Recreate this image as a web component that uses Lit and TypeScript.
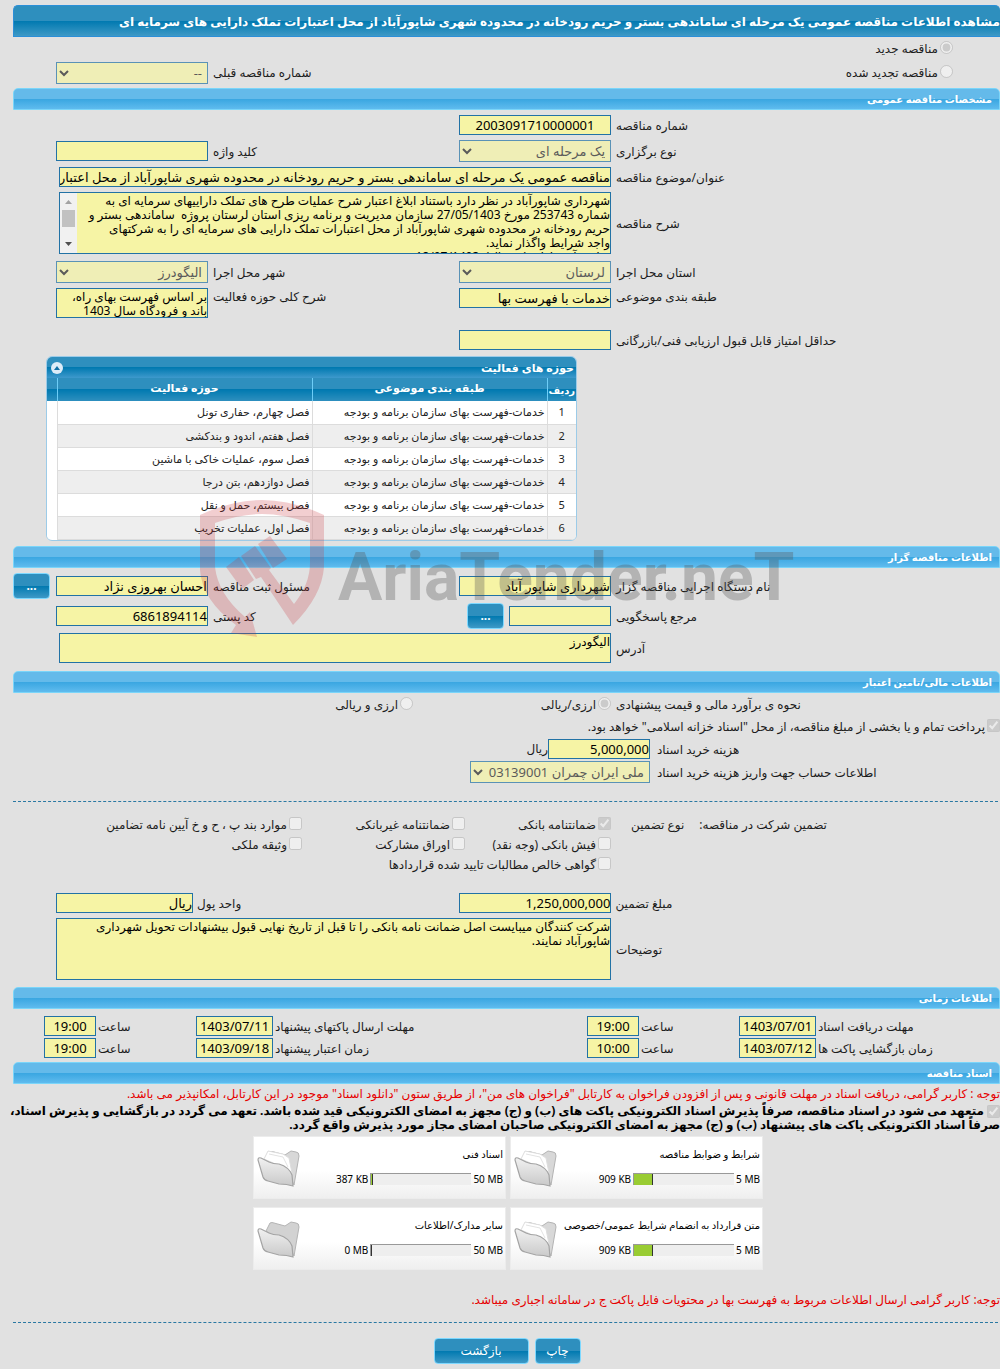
import { LitElement, html, css, svg, nothing } from "lit";
import { customElement } from "lit/decorators.js";

interface Activity { row: number; category: string; field: string; }
interface DocFile { title: string; used: string; max: string; percent: number; empty?: boolean; }

const ACTIVITIES: Activity[] = [
  "فصل چهارم، حفاری تونل",
  "فصل هفتم، اندود و بندکشی",
  "فصل سوم، عملیات خاکی با ماشین",
  "فصل دوازدهم، بتن درجا",
  "فصل بیستم، حمل و نقل",
  "فصل اول، عملیات تخریب",
].map((field, i) => ({ row: i + 1, category: "خدمات-فهرست بهای سازمان برنامه و بودجه", field }));

const FILES: DocFile[] = [
  { title: "شرایط و ضوابط مناقصه", used: "909 KB", max: "5 MB", percent: 19 },
  { title: "اسناد فنی", used: "387 KB", max: "50 MB", percent: 2 },
  { title: "متن قرارداد به انضمام شرایط عمومی/خصوصی", used: "909 KB", max: "5 MB", percent: 19 },
  { title: "سایر مدارک/اطلاعات", used: "0 MB", max: "50 MB", percent: 0, empty: true },
];

const DESCRIPTION = [
  "شهرداری شاپورآباد در نظر دارد باستناد ابلاغ اعتبار شرح عملیات طرح های تملک داراییهای سرمایه ای به",
  "شماره 253743 مورخ 27/05/1403 سازمان مدیریت و برنامه ریزی استان لرستان پروژه  ساماندهی بستر و",
  "حریم رودخانه در محدوده شهری شاپورآباد از محل اعتبارات تملک دارایی های سرمایه ای را به شرکتهای",
  "واجد شرایط واگذار نماید.",
  "مبلغ برآورد اولیه (به ریال)  18/07/1403",
].join("\n");

@customElement("app-root")
export class AppRoot extends LitElement {
  static styles = css`
    :host {
      display: block;
      direction: rtl;
      background: #e1e1e1;
      color: #1c1c1c;
      font-family: "Noto Sans", "DejaVu Sans", sans-serif;
      font-size: 12px;
      line-height: 14px;
      overflow: hidden;
    }
    * { box-sizing: border-box; }
    .page { position: relative; padding: 5px 0; white-space: nowrap; }
    h1, h2 {
      margin: 0 0 0 13px;
      color: #fff;
      font-weight: bold;
      border-radius: 5px 5px 0 0;
      overflow: hidden;
    }
    h1 {
      height: 32px;
      padding-top: 9px;
      font-size: 12px;
      border: 1px solid #2b8fd8;
      border-inline-start: 0;
      background: linear-gradient(#2e8fbe 0 49%, #0079b0 50%, #3e99c6);
    }
    h2 {
      height: 22px;
      padding: 3px 7px 0;
      font-size: 10px;
      border: 1px solid #7ad5f9;
      background: linear-gradient(#64baea 0 49%, #39a6e1 50%, #5fbbee);
    }
    .stack { display: flex; flex-direction: column; gap: 5px; padding: 5px 0; }
    .row {
      display: grid;
      grid-template-columns: minmax(0, 384fr) 152px minmax(0, 241fr) 152px;
      column-gap: 5px;
      align-items: center;
      padding-inline-end: 56px;
    }
    .row > label { text-align: end; padding-top: 2px; }
    .place { margin-top: 2px; }
    .score { margin-top: 7px; }
    .top { align-items: start; }
    .wide { grid-column: 2 / -1; margin-inline-end: 3px; }
    input:not([type]), textarea, select {
      width: 100%;
      min-width: 0;
      margin: 0;
      font-family: inherit;
      font-size: 12px;
      line-height: 14px;
      color: #000;
      background: #f6f4a5;
      border: 1px solid #2272a5;
      border-radius: 0;
      outline: 0;
      direction: rtl;
    }
    input:not([type]) { height: 20px; padding: 1px 0; font-size: 13px; }
    select { height: 22px; padding: 0 1px; font-size: 13px; }
    select:disabled { opacity: 0.7; color: #222; }
    textarea { display: block; padding: 1px 0 0; resize: none; white-space: pre; overflow: hidden; }
    .h62 { height: 62px; }
    .h30 { height: 30px; }
    .scrolled { position: relative; }
    .rail { position: absolute; left: 1px; top: 1px; background: #f1f1f1; }
    .center { text-align: center; }
    input[type="radio"], input[type="checkbox"] { width: 13px; height: 13px; margin: 0; flex: none; }
    .opt { display: flex; align-items: center; gap: 2px; height: 20px; }
    .opt input { margin-bottom: 3px; }
    .type { padding-inline-start: 47px; height: 24px; }
    .type-row { padding-inline-end: 56px; display: grid; column-gap: 5px; align-items: center; height: 22px;
      grid-template-columns: minmax(0, 546fr) minmax(0, 241fr) 152px; }
    .type-row > label:nth-child(2) { text-align: end; }
    .prior { padding-bottom: 5px; }

    .panel {
      width: 531px;
      margin-top: 1px;
      margin-inline-start: 423px;
      border: 1px solid #9ccbe8;
      border-radius: 6px;
      overflow: hidden;
      background: #fff;
    }
    .panel-head {
      display: flex;
      align-items: center;
      justify-content: space-between;
      height: 21px;
      padding: 0 2px 0 4px;
      color: #fff;
      font-size: 11px;
      font-weight: bold;
      background: linear-gradient(#2e8fbe 0 49%, #0079b0 50%, #3e99cc);
    }
    .collapse { width: 12px; height: 12px; padding: 0; border: 0; border-radius: 50%; background: #dcecf8; display: grid; place-items: center; }
    table { width: 100%; border-collapse: collapse; table-layout: fixed; }
    th {
      height: 23px; padding: 0 0 3px; color: #fff; font-size: 11px;
      background: linear-gradient(#2e8fbe 0 49%, #0079b0 50%, #2e8fbe);
      border-inline-end: 1px solid #6dcdf7;
    }
    th:first-child { padding: 0; font-size: 10px; }
    td { height: 23px; padding: 0 2px; font-size: 11px; color: #222; border-inline-end: 1px solid #dcdcdc; border-bottom: 1px solid #dcdcdc; }
    th:last-child, td:last-child { border-inline-end: 0; }
    td:last-child { background: #fff; border-bottom: 0; }
    tr:nth-child(even) td:not(:last-child) { background: #eee; }
    td:first-child { text-align: center; }
    .c-num { width: 29px; }
    .c-cat { width: 235px; }
    .c-end { width: 10px; }

    .btn {
      height: 26px;
      border: 1px solid #7dd8ff;
      border-radius: 4px;
      padding: 0;
      color: #fff;
      font-family: inherit;
      font-size: 12px;
      background: linear-gradient(#2e8fbe 0 49%, #0079b0 50%, #3e99c6);
    }
    .more { width: 37px; font-weight: bold; font-size: 12px; }
    .org { height: 26px; grid-template-columns: minmax(0, 384fr) 152px minmax(0, 241fr) 152px 38px; padding-inline-end: 13px; }
    .org .more:last-child { justify-self: end; }
    .pair { display: flex; align-items: center; gap: 5px; }
    .joined { gap: 0; }
    .w102:not([type]) { width: 102px; }
    .tight { gap: 4px; padding-bottom: 8px; }

    .fin { display: grid; grid-template-columns: minmax(0, 384fr) 193px minmax(0, 413fr); column-gap: 5px; align-items: center; height: 24px; }
    .fin .caption { text-align: end; }
    .fees { display: grid; gap: 2px; padding-top: 2px; }
    .fee { display: grid; grid-template-columns: minmax(0, 343fr) minmax(0, 650fr); column-gap: 7px; align-items: center; }
    .fee > label { text-align: end; padding-top: 2px; }
    .fee select { width: 180px; }
    hr { margin: 18px 2px 13px 13px; border: 0; border-top: 1px dashed #2a78a2; }
    .guar { display: grid; grid-template-columns: minmax(0, 384fr) 141px 158px minmax(0, 302fr); column-gap: 5px; align-items: center; }
    .guar .caption { display: flex; justify-content: end; gap: 15px; padding-inline-end: 15px; }
    .guar .long { grid-column: 2 / -1; }
    .guar .skip { grid-column: 2; }
    .money { grid-template-columns: minmax(0, 384fr) 152px minmax(0, 258fr) 137px; column-gap: 4px; }
    .guar-box { padding-top: 18px; padding-bottom: 7px; }

    .dates { display: grid; gap: 2px; align-items: center; padding: 7px 0 4px; padding-inline-end: 44px;
      grid-template-columns: minmax(0, 182fr) 77px minmax(0, 96fr) 52px minmax(0, 310fr) 77px minmax(0, 96fr) 52px; }
    .dates label { text-align: end; padding-top: 2px; }

    .note { color: #e60000; height: 20px; line-height: 20px; }
    .pledge { font-weight: bold; color: #000; display: block; height: 28px; }
    .pledge input { vertical-align: bottom; margin-inline-end: 3px; }
    .files { display: grid; grid-template-columns: 253px 253px; gap: 8px 4px; justify-content: center; padding: 4px 0 20px; margin-left: 16px; }
    .file { display: flex; height: 63px; padding: 10px 2px 0 3px; border: 1px solid #ececec; background: linear-gradient(#fff 55%, #efefef); font-size: 10px; line-height: 14px; color: #000; }
    .file-body { flex: 1; display: flex; flex-direction: column; gap: 11px; }
    .quota { display: flex; align-items: center; gap: 2px; padding-inline-start: 2px; direction: ltr; justify-content: end; }
    .bar { width: 101px; height: 12px; background: #eee; border: 1px solid #999; border-right: 0; border-bottom: 0; display: flex; }
    .fill { background: #9c3; border-right: 1px solid #333; min-width: 1px; }
    .folder { width: 44px; height: 42px; }
    .note.last { margin-bottom: 12px; }
    .cut { margin: 0 2px 15px 13px; }
    .actions { display: flex; justify-content: center; gap: 6px; margin-left: 14px; }
    .print { width: 46px; }
    .back { width: 95px; }

    .mark { position: absolute; left: 190px; top: 490px; width: 620px; height: 160px; pointer-events: none; direction: ltr; }
    .mark text { font-family: Roboto, sans-serif; font-weight: bold; }
  `;

  private more = html`<button class="btn more" type="button" aria-label="انتخاب">...</button>`;

  private folder(empty?: boolean) {
    return html`<svg class="folder" viewBox="0 0 44 42" aria-hidden="true">
      <defs>
        <linearGradient id="ff" x1="0" y1="0" x2="0" y2="1"><stop offset="0" stop-color="#f1f1f1"/><stop offset="1" stop-color="#c9c9c9"/></linearGradient>
      </defs>
      <path d="M9 13 L13 5 Q15 4 17 5 L28 8 L34 4 L39 5 Q42 5 42 9 L37 38 L33 30 Z" fill="${empty ? "#d2d2d2" : "#d8d8d8"}" stroke="#b4b4b4"/>
      ${empty ? nothing : svg`<path d="M7 12 L11 4 L26 7 L32 11 L35 26 L30 22 Z" fill="#fff" stroke="#ddd"/><path d="M12 7 L26 10 L31 20" fill="none" stroke="#e3e3e3"/>`}
      <path d="M1 13 Q1 10 4 11 L12 15 Q16 17 22 17 Q32 20 35 28 L36 39 Q30 37 22 37 L11 34 Q7 33 6 30 Z" fill="url(#ff)" stroke="#a4a4a4" stroke-width="1.2"/>
    </svg>`;
  }

  private text(id: string, value: string, cls = "") {
    return html`<input id=${id} class=${cls} .value=${value} readonly />`;
  }

  private pick(id: string, value: string) {
    return html`<select id=${id} disabled><option>${value}</option></select>`;
  }

  private check(id: string, label: string, checked = false, cls = "") {
    return html`<label class="opt ${cls}" for=${id}><input id=${id} type="checkbox" .checked=${checked} disabled />${label}</label>`;
  }

  private radio(id: string, name: string, label: string, checked = false, cls = "") {
    return html`<label class="opt ${cls}" for=${id}><input id=${id} type="radio" name=${name} .checked=${checked} disabled />${label}</label>`;
  }

  private general() {
    return html`
      <div class="stack">
        <div class="row"><label for="no">شماره مناقصه</label>${this.text("no", "2003091710000001", "center")}</div>
        <div class="row">
          <label for="kind">نوع برگزاری</label>${this.pick("kind", "یک مرحله ای")}
          <label for="key">کلید واژه</label>${this.text("key", "")}
        </div>
        <div class="row"><label for="subject">عنوان/موضوع مناقصه</label><div class="wide">${this.text("subject", "مناقصه عمومی یک مرحله ای ساماندهی بستر و حریم رودخانه در محدوده شهری شاپورآباد از محل اعتبارات تملک دارایی های سرمایه ای")}</div></div>
        <div class="row"><label for="desc">شرح مناقصه</label>
          <div class="wide scrolled">
            <textarea id="desc" class="h62" readonly .value=${DESCRIPTION}></textarea>
            <svg class="rail" width="17" height="60" viewBox="0 0 17 60" aria-hidden="true">
              <path d="M5 11 L8.500 7 L12 11Z" fill="#a3a3a3"/><rect x="2" y="17" width="13" height="17" fill="#c1c1c1"/><path d="M5 49 L8.500 53 L12 49Z" fill="#505050"/>
            </svg>
          </div>
        </div>
        <div class="row place">
          <label for="prov">استان محل اجرا</label>${this.pick("prov", "لرستان")}
          <label for="city">شهر محل اجرا</label>${this.pick("city", "الیگودرز")}
        </div>
        <div class="row top">
          <label for="cat">طبقه بندی موضوعی</label>${this.text("cat", "خدمات با فهرست بها")}
          <label for="scope">شرح کلی حوزه فعالیت</label><textarea id="scope" class="h30" readonly .value=${"بر اساس فهرست بهای راه،\nباند و فرودگاه سال 1403"}></textarea>
        </div>
        <div class="row score"><label for="score">حداقل امتیاز قابل قبول ارزیابی فنی/بازرگانی</label>${this.text("score", "")}</div>
        <div class="panel">
          <div class="panel-head"><span>حوزه های فعالیت</span>
            <button class="collapse" type="button" aria-label="بستن"><svg width="6" height="4" viewBox="0 0 6 4"><path d="M0 4 L3 0 L6 4Z" fill="#0f6fa5"/></svg></button>
          </div>
          <table>
            <colgroup><col class="c-num" /><col class="c-cat" /><col /><col class="c-end" /></colgroup>
            <thead><tr><th>ردیف</th><th>طبقه بندی موضوعی</th><th>حوزه فعالیت</th><th></th></tr></thead>
            <tbody>${ACTIVITIES.map((a) => html`<tr><td>${a.row}</td><td>${a.category}</td><td>${a.field}</td><td></td></tr>`)}</tbody>
          </table>
        </div>
      </div>`;
  }

  private organiser() {
    return html`
      <div class="stack tight">
        <div class="row org">
          <label for="org">نام دستگاه اجرایی مناقصه گزار</label>${this.text("org", "شهرداری شاپور آباد")}
          <label for="clerk">مسئول ثبت مناقصه</label>${this.text("clerk", "احسان بهروزی نژاد")}${this.more}
        </div>
        <div class="row org">
          <label for="ref">مرجع پاسخگویی</label><div class="pair">${this.text("ref", "", "w102")}${this.more}</div>
          <label for="post">کد پستی</label>${this.text("post", "6861894114")}
        </div>
        <div class="row"><label for="addr">آدرس</label><div class="wide"><textarea id="addr" class="h30" readonly .value=${"الیگودرز"}></textarea></div></div>
      </div>`;
  }

  private finance() {
    return html`
      <div class="fin">
        <span class="caption">نحوه ی برآورد مالی و قیمت پیشنهادی</span>
        ${this.radio("cur1", "cur", "ارزی/ریالی", true)}${this.radio("cur2", "cur", "ارزی و ریالی")}
      </div>
      ${this.check("bond", "پرداخت تمام و یا بخشی از مبلغ مناقصه، از محل \"اسناد خزانه اسلامی\" خواهد بود.", true)}
      <div class="fees">
        <div class="fee"><label for="fee">هزینه خرید اسناد</label><div class="pair joined">${this.text("fee", "5,000,000", "w102")}<span>ریال</span></div></div>
        <div class="fee"><label for="acc">اطلاعات حساب جهت واریز هزینه خرید اسناد</label>${this.pick("acc", "ملی ایران چمران 03139001")}</div>
      </div>
      <hr />
      <div class="guar">
        <div class="caption"><span>تضمین شرکت در مناقصه:</span><span>نوع تضمین</span></div>
        ${this.check("g1", "ضمانتنامه بانکی", true)}${this.check("g2", "ضمانتنامه غیربانکی")}${this.check("g3", "موارد بند پ ، ح و خ آیین نامه تضامین")}
        ${this.check("g4", "فیش بانکی (وجه نقد)", false, "skip")}${this.check("g5", "اوراق مشارکت")}${this.check("g6", "وثیقه ملکی")}
        <div></div>${this.check("g7", "گواهی خالص مطالبات تایید شده قراردادها", false, "long")}
      </div>
      <div class="stack guar-box">
        <div class="row money">
          <label for="amt">مبلغ تضمین</label>${this.text("amt", "1,250,000,000")}
          <label for="unit">واحد پول</label>${this.text("unit", "ریال")}
        </div>
        <div class="row"><label for="rem">توضیحات</label><textarea id="rem" class="wide h62" readonly .value=${"شرکت کنندگان میبایست اصل ضمانت نامه بانکی را تا قبل از تاریخ نهایی قبول بیشنهادات تحویل شهرداری\nشاپورآباد نمایند."}></textarea></div>
      </div>`;
  }

  private date(id: string, label: string, day: string, hour: string) {
    return html`<label for=${id}>${label}</label>${this.text(id, day, "center")}<label for="${id}h">ساعت</label>${this.text(id + "h", hour, "center")}`;
  }

  render() {
    return html`
      <main class="page">
        <h1>مشاهده اطلاعات مناقصه عمومی یک مرحله ای ساماندهی بستر و حریم رودخانه در محدوده شهری شاپورآباد از محل اعتبارات تملک دارایی های سرمایه ای</h1>
        ${this.radio("new", "mode", "مناقصه جدید", true, "type")}
        <div class="prior"><div class="type-row">
          ${this.radio("renew", "mode", "مناقصه تجدید شده", false, "type")}
          <label for="prev">شماره مناقصه قبلی</label>${this.pick("prev", "--")}
        </div></div>
        <h2>مشخصات مناقصه عمومی</h2>
        ${this.general()}
        <h2>اطلاعات مناقصه گزار</h2>
        ${this.organiser()}
        <h2>اطلاعات مالی/تامین اعتبار</h2>
        ${this.finance()}
        <h2>اطلاعات زمانی</h2>
        <div class="dates">
          ${this.date("d1", "مهلت دریافت اسناد", "1403/07/01", "19:00")}
          ${this.date("d2", "مهلت ارسال پاکتهای پیشنهاد", "1403/07/11", "19:00")}
          ${this.date("d3", "زمان بازگشایی پاکت ها", "1403/07/12", "10:00")}
          ${this.date("d4", "زمان اعتبار پیشنهاد", "1403/09/18", "19:00")}
        </div>
        <h2>اسناد مناقصه</h2>
        <div class="note">توجه : کاربر گرامی، دریافت اسناد در مهلت قانونی و پس از افزودن فراخوان به کارتابل "فراخوان های من"، از طریق ستون "دانلود اسناد" موجود در این کارتابل، امکانپذیر می باشد.</div>
        <label class="pledge" for="pledge"><input id="pledge" type="checkbox" .checked=${true} disabled />متعهد می شود در اسناد مناقصه، صرفاً پذیرش اسناد الکترونیکی پاکت های (ب) و (ج) مجهز به امضای الکترونیکی قید شده باشد. تعهد می گردد در بازگشایی و پذیرش اسناد،<br />صرفاً اسناد الکترونیکی پاکت های پیشنهاد (ب) و (ج) مجهز به امضای الکترونیکی صاحبان امضای مجاز مورد پذیرش واقع گردد.</label>
        <div class="files">
          ${FILES.map((f) => html`<div class="file">
            <div class="file-body"><span>${f.title}</span>
              <div class="quota"><span>${f.used}</span><div class="bar"><div class="fill" style="width:${f.percent}%"></div></div><span>${f.max}</span></div>
            </div>${this.folder(f.empty)}</div>`)}
        </div>
        <div class="note last">توجه: کاربر گرامی ارسال اطلاعات مربوط به فهرست بها در محتویات فایل پاکت ج در سامانه اجباری میباشد.</div>
        <hr class="cut" />
        <div class="actions"><button class="btn print" type="button">چاپ</button><button class="btn back" type="button">بازگشت</button></div>
        <svg class="mark" viewBox="190 490 620 160" aria-hidden="true">
          <g fill="#c8323c" fill-opacity=".24">
            <path d="M200 515 Q232 500 262 500 Q292 500 324 515 V567 Q322 596 293 625 L261 577 L256 579 L241 556 L255 546 L271 568 L269 570 L294 604 Q310 584 310 563 V523 Q284 514 262 514 Q240 514 215 523 V567 Q218 594 245 617 L250 612 L257 637 L231 633 L236 625 Q202 600 200 570Z"/>
            <path d="M258 544 L270 536 L287 559 L273 568Z"/>
            <path d="M226 567 L239 557 L254 580 L242 589Z"/>
          </g>
          <text x="338" y="600" font-size="66" fill="#555" fill-opacity=".33">AriaTender.neT</text>
        </svg>
      </main>`;
  }
}
